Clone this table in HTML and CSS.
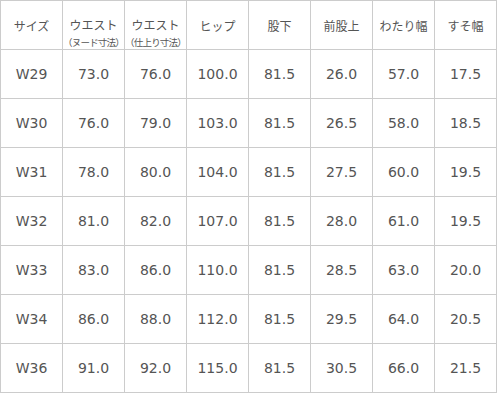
FILE: index.html
```html
<!DOCTYPE html>
<html lang="ja">
<head>
<meta charset="utf-8">
<title>サイズ表</title>
<link rel="stylesheet" href="styles.css">
</head>
<body>
<table class="size-table">
  <thead>
    <tr>
      <th class="head">サイズ</th>
      <th class="head two"><span class="main">ウエスト</span><span class="sub">（ヌード寸法）</span></th>
      <th class="head two"><span class="main">ウエスト</span><span class="sub">（仕上り寸法）</span></th>
      <th class="head">ヒップ</th>
      <th class="head">股下</th>
      <th class="head">前股上</th>
      <th class="head">わたり幅</th>
      <th class="head">すそ幅</th>
    </tr>
  </thead>
  <tbody>
    <tr><td>W29</td><td>73.0</td><td>76.0</td><td>100.0</td><td>81.5</td><td>26.0</td><td>57.0</td><td>17.5</td></tr>
    <tr><td>W30</td><td>76.0</td><td>79.0</td><td>103.0</td><td>81.5</td><td>26.5</td><td>58.0</td><td>18.5</td></tr>
    <tr><td>W31</td><td>78.0</td><td>80.0</td><td>104.0</td><td>81.5</td><td>27.5</td><td>60.0</td><td>19.5</td></tr>
    <tr><td>W32</td><td>81.0</td><td>82.0</td><td>107.0</td><td>81.5</td><td>28.0</td><td>61.0</td><td>19.5</td></tr>
    <tr><td>W33</td><td>83.0</td><td>86.0</td><td>110.0</td><td>81.5</td><td>28.5</td><td>63.0</td><td>20.0</td></tr>
    <tr><td>W34</td><td>86.0</td><td>88.0</td><td>112.0</td><td>81.5</td><td>29.5</td><td>64.0</td><td>20.5</td></tr>
    <tr><td>W36</td><td>91.0</td><td>92.0</td><td>115.0</td><td>81.5</td><td>30.5</td><td>66.0</td><td>21.5</td></tr>
  </tbody>
</table>
</body>
</html>
```

FILE: styles.css
```css
html, body {
  margin: 0;
  padding: 0;
  background: #ffffff;
}

.size-table {
  border-collapse: collapse;
  table-layout: fixed;
  width: 497px;
  font-family: "DejaVu Sans", Verdana, "Noto Sans CJK JP", sans-serif;
  color: #555555;
}

.size-table th,
.size-table td {
  width: 61px;
  height: 48px;
  padding: 0;
  border: 1px solid #cccccc;
  text-align: center;
  vertical-align: middle;
  font-weight: normal;
  white-space: nowrap;
  overflow: hidden;
}

.size-table td {
  font-size: 14px;
}

.head {
  font-family: "Noto Sans CJK JP", sans-serif;
  font-size: 12px;
}

.head.two {
  vertical-align: top;
}

.main {
  display: block;
  line-height: 16px;
  margin-top: 16px;
}

.sub {
  display: block;
  font-size: 9.5px;
  line-height: 12px;
  margin-top: 3px;
  letter-spacing: -0.8px;
}
```
